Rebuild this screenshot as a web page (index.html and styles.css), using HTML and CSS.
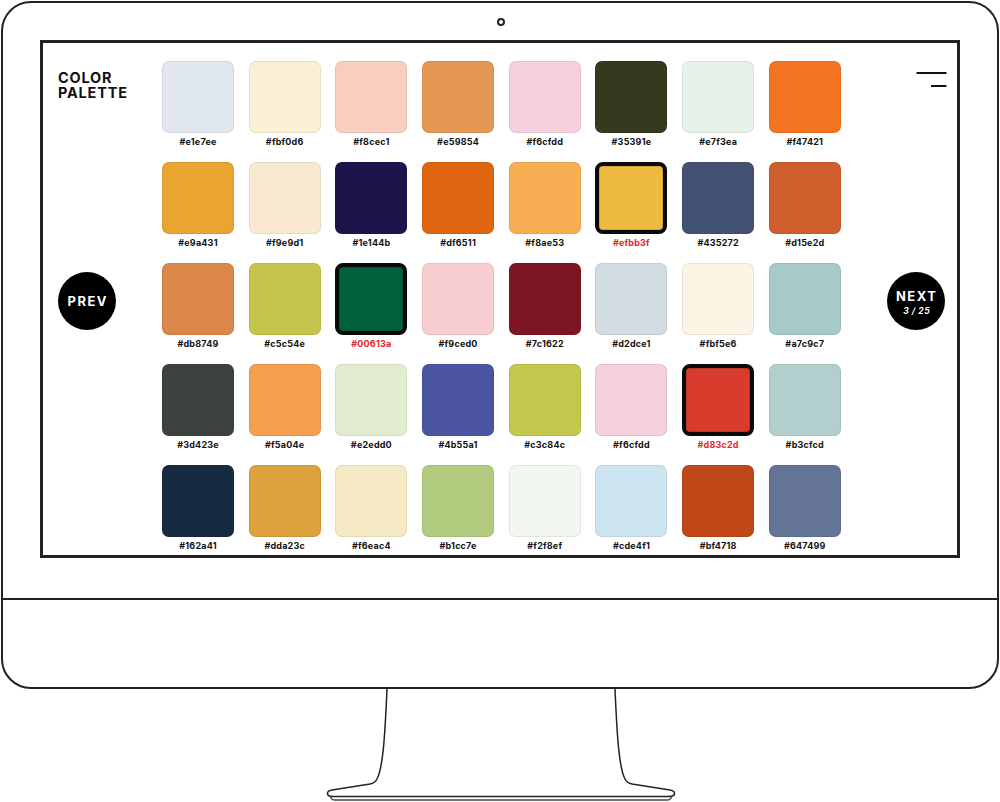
FILE: index.html
```html
<!DOCTYPE html>
<html lang="en">
<head>
<meta charset="utf-8">
<title>Color Palette</title>
<link rel="stylesheet" href="styles.css">
</head>
<body>
<div class="page">
  <div class="monitor">
    <div class="bezel">
      <span class="camera"></span>
      <div class="screen">
        <aside class="side side-left">
          <h1 class="title"><span class="title-line">COLOR</span><span class="title-line">PALETTE</span></h1>
          <button class="nav-btn">PREV</button>
        </aside>
        <main class="grid">
          <div class="cell"><div class="swatch" style="background:#e1e7ee"></div><div class="label">#e1e7ee</div></div>
          <div class="cell"><div class="swatch" style="background:#fbf0d6"></div><div class="label">#fbf0d6</div></div>
          <div class="cell"><div class="swatch" style="background:#f8cec1"></div><div class="label">#f8cec1</div></div>
          <div class="cell"><div class="swatch" style="background:#e59854"></div><div class="label">#e59854</div></div>
          <div class="cell"><div class="swatch" style="background:#f6cfdd"></div><div class="label">#f6cfdd</div></div>
          <div class="cell"><div class="swatch" style="background:#35391e"></div><div class="label">#35391e</div></div>
          <div class="cell"><div class="swatch" style="background:#e7f3ea"></div><div class="label">#e7f3ea</div></div>
          <div class="cell"><div class="swatch" style="background:#f47421"></div><div class="label">#f47421</div></div>

          <div class="cell"><div class="swatch" style="background:#e9a431"></div><div class="label">#e9a431</div></div>
          <div class="cell"><div class="swatch" style="background:#f9e9d1"></div><div class="label">#f9e9d1</div></div>
          <div class="cell"><div class="swatch" style="background:#1e144b"></div><div class="label">#1e144b</div></div>
          <div class="cell"><div class="swatch" style="background:#df6511"></div><div class="label">#df6511</div></div>
          <div class="cell"><div class="swatch" style="background:#f8ae53"></div><div class="label">#f8ae53</div></div>
          <div class="cell selected"><div class="swatch" style="background:#efbb3f"></div><div class="label">#efbb3f</div></div>
          <div class="cell"><div class="swatch" style="background:#435272"></div><div class="label">#435272</div></div>
          <div class="cell"><div class="swatch" style="background:#d15e2d"></div><div class="label">#d15e2d</div></div>

          <div class="cell"><div class="swatch" style="background:#db8749"></div><div class="label">#db8749</div></div>
          <div class="cell"><div class="swatch" style="background:#c5c54e"></div><div class="label">#c5c54e</div></div>
          <div class="cell selected"><div class="swatch" style="background:#00613a"></div><div class="label">#00613a</div></div>
          <div class="cell"><div class="swatch" style="background:#f9ced0"></div><div class="label">#f9ced0</div></div>
          <div class="cell"><div class="swatch" style="background:#7c1622"></div><div class="label">#7c1622</div></div>
          <div class="cell"><div class="swatch" style="background:#d2dce1"></div><div class="label">#d2dce1</div></div>
          <div class="cell"><div class="swatch" style="background:#fbf5e6"></div><div class="label">#fbf5e6</div></div>
          <div class="cell"><div class="swatch" style="background:#a7c9c7"></div><div class="label">#a7c9c7</div></div>

          <div class="cell"><div class="swatch" style="background:#3d423e"></div><div class="label">#3d423e</div></div>
          <div class="cell"><div class="swatch" style="background:#f5a04e"></div><div class="label">#f5a04e</div></div>
          <div class="cell"><div class="swatch" style="background:#e2edd0"></div><div class="label">#e2edd0</div></div>
          <div class="cell"><div class="swatch" style="background:#4b55a1"></div><div class="label">#4b55a1</div></div>
          <div class="cell"><div class="swatch" style="background:#c3c84c"></div><div class="label">#c3c84c</div></div>
          <div class="cell"><div class="swatch" style="background:#f6cfdd"></div><div class="label">#f6cfdd</div></div>
          <div class="cell selected"><div class="swatch" style="background:#d83c2d"></div><div class="label">#d83c2d</div></div>
          <div class="cell"><div class="swatch" style="background:#b3cfcd"></div><div class="label">#b3cfcd</div></div>

          <div class="cell"><div class="swatch" style="background:#162a41"></div><div class="label">#162a41</div></div>
          <div class="cell"><div class="swatch" style="background:#dda23c"></div><div class="label">#dda23c</div></div>
          <div class="cell"><div class="swatch" style="background:#f6eac4"></div><div class="label">#f6eac4</div></div>
          <div class="cell"><div class="swatch" style="background:#b1cc7e"></div><div class="label">#b1cc7e</div></div>
          <div class="cell"><div class="swatch" style="background:#f2f8ef"></div><div class="label">#f2f8ef</div></div>
          <div class="cell"><div class="swatch" style="background:#cde4f1"></div><div class="label">#cde4f1</div></div>
          <div class="cell"><div class="swatch" style="background:#bf4718"></div><div class="label">#bf4718</div></div>
          <div class="cell"><div class="swatch" style="background:#647499"></div><div class="label">#647499</div></div>
        </main>
        <aside class="side side-right">
          <svg class="menu" width="31" height="16" viewBox="0 0 31 16" aria-label="menu">
            <line x1="0.5" y1="1" x2="30.5" y2="1" stroke="#111" stroke-width="2"/>
            <line x1="15" y1="14" x2="30.5" y2="14" stroke="#111" stroke-width="2"/>
          </svg>
          <button class="nav-btn next">NEXT<span class="count">3 / 25</span></button>
        </aside>
      </div>
    </div>
    <div class="chin"></div>
  </div>
  <svg class="stand" width="1000" height="113" viewBox="0 689 1000 113">
    <path d="M386 689 C384 735 382 768 376 779 Q374 783 369 784 L331 790 Q326 791 326.5 794 Q327 796.5 332 796.5 L668 796.5 Q673 796.5 673.5 794 Q674 791 669 790 L631 784 Q626 783 624 779 C618 768 616 735 614 689" fill="#fff" stroke="#222" stroke-width="1.5"/>
    <path d="M329.5 796.5 Q330 800 334 800 L666 800 Q670 800 670.5 796.5" fill="none" stroke="#444" stroke-width="1.5"/>
  </svg>
</div>
</body>
</html>
```

FILE: styles.css
```css
* {
  box-sizing: border-box;
}

html, body {
  margin: 0;
  padding: 0;
  background: #fff;
}

body {
  font-family: Inter, "Liberation Sans", sans-serif;
  color: #111;
}

.page {
  width: 1000px;
  height: 802px;
  padding: 1px 1px 0;
  overflow: hidden;
}

.monitor {
  position: relative;
  width: 998px;
  height: 688px;
  border: 2px solid #222;
  border-radius: 30px;
  display: flex;
  flex-direction: column;
}

.bezel {
  padding: 37px 37px 40px;
}

.camera {
  position: absolute;
  left: 494px;
  top: 15px;
  width: 8px;
  height: 8px;
  border: 2px solid #222;
  border-radius: 50%;
}

.screen {
  height: 518px;
  border: 3px solid #222;
  display: grid;
  grid-template-columns: 119px auto 1fr;
  overflow: hidden;
}

.side {
  display: grid;
  grid-template-rows: 1fr auto 1fr;
  padding-top: 4px;
}

.side-left {
  padding-left: 15px;
  justify-items: start;
}

.side-right {
  padding-right: 10px;
  justify-items: end;
}

.title {
  margin: 24px 0 0;
  align-self: start;
  display: flex;
  flex-direction: column;
  gap: 1px;
  font-size: 14.5px;
  line-height: 14px;
  font-weight: 700;
  letter-spacing: 0.8px;
  color: #111;
}

.title-line {
  display: block;
  height: 14px;
}

.menu {
  display: block;
  margin-top: 25px;
  align-self: start;
}

.nav-btn {
  width: 58px;
  height: 58px;
  border-radius: 50%;
  border: none;
  background: #000;
  color: #fff;
  font-family: Inter, "Liberation Sans", sans-serif;
  font-weight: 700;
  font-size: 13px;
  letter-spacing: 1.5px;
  padding: 0 0 0 1.5px;
  display: flex;
  flex-direction: column;
  align-items: center;
  justify-content: center;
  line-height: 14px;
}

.side-right .nav-btn {
  margin-right: 2px;
}

.next {
  padding-top: 4px;
}

.count {
  font-size: 8.5px;
  font-style: italic;
  letter-spacing: 0.6px;
  line-height: 12px;
  margin-top: 2px;
}

.grid {
  display: grid;
  grid-template-columns: repeat(8, 72px);
  column-gap: 14.7px;
  row-gap: 15px;
  padding-top: 18px;
  align-content: start;
}

.cell {
  display: flex;
  flex-direction: column;
  align-items: center;
}

.swatch {
  width: 72px;
  height: 72px;
  border-radius: 7px;
  box-shadow: inset 0 0 0 1px rgba(0, 0, 0, 0.07);
}

.selected .swatch {
  border: 4px solid #0a0a0a;
  border-radius: 8px;
  box-shadow: inset 0 0 0 1px rgba(0, 0, 0, 0.12);
}

.label {
  margin-top: 4px;
  font-size: 9px;
  line-height: 10px;
  font-weight: 700;
  letter-spacing: 0.2px;
  color: #111;
}

.selected .label {
  color: #e2262a;
}

.chin {
  flex: 1;
  border-top: 2px solid #222;
}

.stand {
  display: block;
}
```
